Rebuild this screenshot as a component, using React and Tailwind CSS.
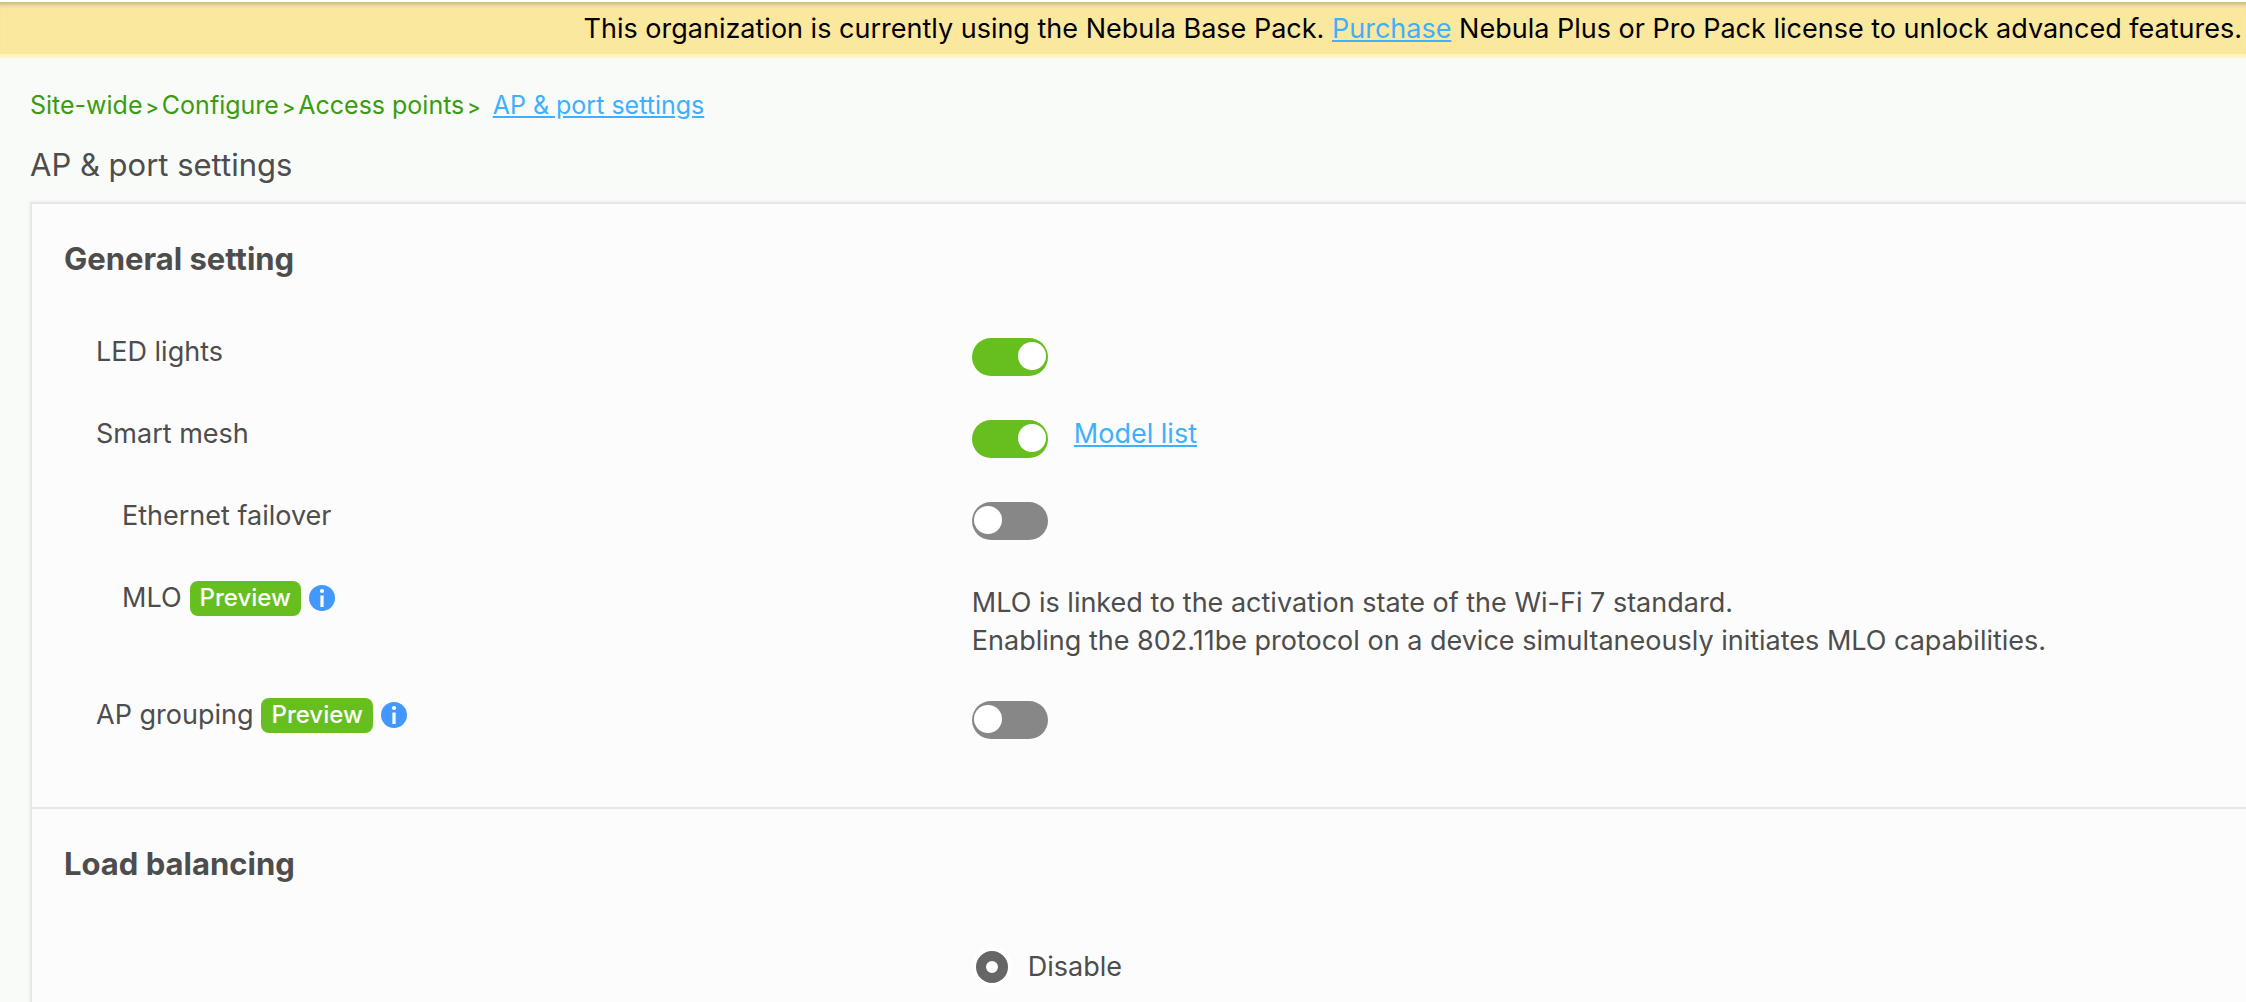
import { useId, useState } from "react";

const Toggle = ({ id, defaultOn = false }) => {
  const [on, setOn] = useState(defaultOn);

  return (
    <span className="relative mt-2.5 inline-flex h-[38px] w-[76px] shrink-0">
      <input
        id={id}
        type="checkbox"
        role="switch"
        checked={on}
        onChange={() => setOn(!on)}
        className="peer h-full w-full cursor-pointer appearance-none rounded-full bg-[#878787] checked:bg-[#66bf1e]"
      />
      <span className="pointer-events-none absolute left-0.5 top-1 h-7 w-7 rounded-full bg-white peer-checked:left-auto peer-checked:right-0.5" />
    </span>
  );
};

const InfoIcon = () => (
  <svg viewBox="0 0 26 26" className="h-[26px] w-[26px] shrink-0" aria-hidden="true">
    <circle cx="13" cy="13" r="13" fill="#4398ff" />
    <circle cx="13" cy="6" r="2.1" fill="#fff" />
    <rect x="11.4" y="10.5" width="3.2" height="11.5" fill="#fff" />
  </svg>
);

const Preview = () => (
  <span className="flex h-[35px] items-center rounded-lg bg-[#66bf1e] px-2.5 text-[24px] font-medium text-white">
    Preview
  </span>
);

const Row = ({ label, preview, indent, id, children }) => (
  <div className="grid grid-cols-[5fr_7fr] items-start">
    <div className={indent ? "flex h-12 items-center gap-2 pl-[26px]" : "flex h-12 items-center gap-2"}>
      {id ? <label htmlFor={id}>{label}</label> : <span>{label}</span>}
      {preview && <Preview />}
      {preview && (
        <button type="button" aria-label={`About ${label}`}>
          <InfoIcon />
        </button>
      )}
    </div>
    <div className="flex items-start">{children}</div>
  </div>
);

const crumbs = ["Site-wide", "Configure", "Access points"];

const App = () => {
  const uid = useId();
  const [balancing, setBalancing] = useState("disable");

  return (
    <div className="h-screen overflow-hidden bg-[#f9fbf8] font-['Inter',sans-serif] text-[27px] leading-[38px] text-[#4d4d4d]">
      {/* --- License banner --- */}
      <div className="border-t-2 border-white">
        <div className="flex h-14 items-start justify-end border-b-4 border-[#fdf3cb] bg-[#fbe89f] pr-1 pt-2 text-black shadow-[inset_0_6px_5px_-4px_rgba(0,0,0,0.25)]">
          <p className="whitespace-nowrap">
            This organization is currently using the Nebula Base Pack.{" "}
            <a href="#purchase" className="text-[#3fafff] underline">Purchase</a>{" "}
            Nebula Plus or Pro Pack license to unlock advanced features.
          </p>
        </div>
      </div>

      {/* --- Breadcrumb and title --- */}
      <nav aria-label="Breadcrumb" className="flex items-baseline gap-3 pl-[30px] pt-7 text-[25px] text-[#3b9c10]">
        <span className="flex items-baseline gap-[3px]">
          {crumbs.map((crumb) => (
            <span key={crumb} className="flex items-baseline gap-[3px]">
              {crumb}
              <span className="text-[20px] font-medium">&gt;</span>
            </span>
          ))}
        </span>
        <a href="#ap-port-settings" className="text-[#3fafff] underline">AP &amp; port settings</a>
      </nav>
      <h1 className="pl-[30px] pt-5 text-[31px]">AP &amp; port settings</h1>

      <main className="ml-[30px] mt-[18px] h-full border-l-2 border-t-2 border-[#e6e7e6] bg-[#fcfcfc] shadow-[0_0_4px_rgba(0,0,0,0.08)]">
        {/* --- General setting --- */}
        <section className="border-b-2 border-[#e6e7e6] pb-[68px] pt-9">
          <h2 className="pl-8 text-[31px] font-bold">General setting</h2>
          <div className="flex flex-col gap-[34px] pl-16 pr-12 pt-[50px]">
            <Row label="LED lights" id={`${uid}-led`}>
              <Toggle id={`${uid}-led`} defaultOn />
            </Row>
            <Row label="Smart mesh" id={`${uid}-mesh`}>
              <Toggle id={`${uid}-mesh`} defaultOn />
              <a href="#models" className="pl-[26px] pt-[5px] text-[#3fafff] underline">Model list</a>
            </Row>
            <Row label="Ethernet failover" indent id={`${uid}-eth`}>
              <Toggle id={`${uid}-eth`} />
            </Row>
            <Row label="MLO" indent preview>
              <p className="-mb-[3px] pt-2.5">
                MLO is linked to the activation state of the Wi-Fi 7 standard.
                <br />
                Enabling the 802.11be protocol on a device simultaneously initiates MLO capabilities.
              </p>
            </Row>
            <Row label="AP grouping" preview id={`${uid}-group`}>
              <Toggle id={`${uid}-group`} />
            </Row>
          </div>
        </section>

        {/* --- Load balancing --- */}
        <section className="pt-9">
          <h2 className="pl-8 text-[31px] font-bold">Load balancing</h2>
          <div className="grid grid-cols-[5fr_7fr] pl-16 pr-12 pt-[65px]">
            <label className="col-start-2 flex items-center gap-5 pl-1">
              <input
                type="radio"
                name="balancing"
                checked={balancing === "disable"}
                onChange={() => setBalancing("disable")}
                className="h-8 w-8 appearance-none rounded-full border-[10px] border-[#666] bg-white ring-4 ring-white"
              />
              Disable
            </label>
          </div>
        </section>
      </main>
    </div>
  );
};

export default App;
